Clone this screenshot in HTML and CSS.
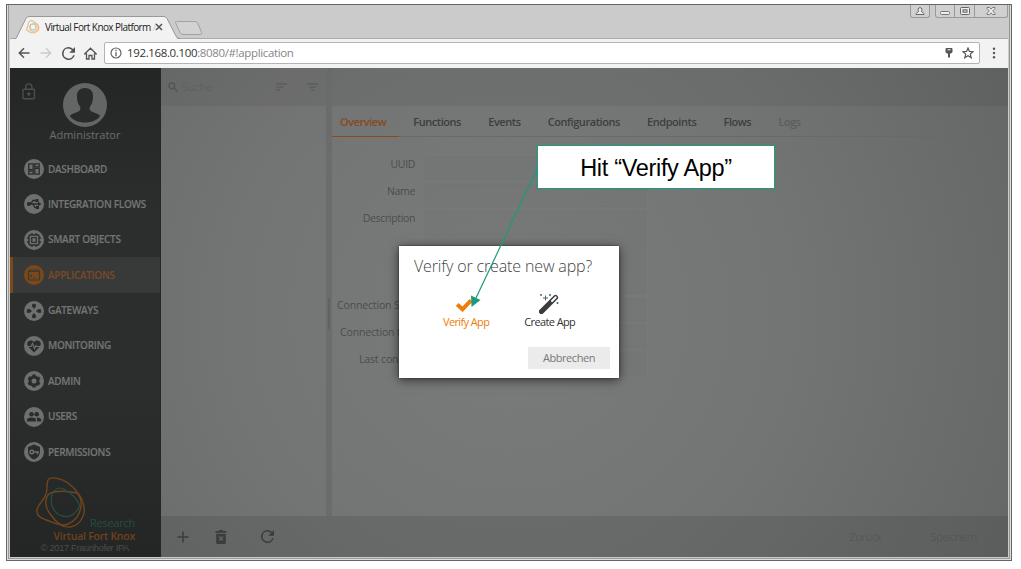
FILE: index.html
```
<!DOCTYPE html>
<html lang="en">
<head>
<meta charset="utf-8">
<title>Virtual Fort Knox Platform</title>
<link rel="stylesheet" href="styles.css">
</head>
<body>
<div class="window">
  <header class="chrome">
    <div class="tabstrip">
      <svg class="tabshape" width="206" height="24" viewBox="0 0 206 24">
        <path d="M2 22.5 L12 2.5 Q13 .5 15 .5 H150 Q152 .5 153 2.5 L163 22.5 V24 H2Z" fill="#f2f2f2"/>
        <path d="M0 22.5 H2 L12 2.5 Q13 .5 15 .5 H150 Q152 .5 153 2.5 L162 20 Q163 22.5 166 22.5" fill="none" stroke="#999"/>
        <path d="M161.500 6.500 Q161 5.500 162.500 5.500 H181 Q183 5.500 184 7.500 L187.500 16.500 Q188 18.500 186 18.500 H169 Q167 18.500 166 16.500Z" fill="#d2d2d2" stroke="#a2a2a2"/>
      </svg>
      <div class="tab">
        <svg width="14" height="14" viewBox="0 0 14 14" fill="none"><path d="M4 1C7-.5 8 3 11 4c3 2 2 7-1 8-4 2-7 0-9-2-1-2 1-3 1-5 0-1 0-3 2-4Z" stroke="#efbd8f" stroke-width="1.300"/><circle cx="7.500" cy="7.500" r="4" stroke="#efbd8f"/><circle cx="7" cy="7" r="3" stroke="#a6cbbf"/></svg>
        <span class="tabtitle">Virtual Fort Knox Platform <i>/</i></span>
        <svg width="8" height="8" viewBox="0 0 8 8"><path d="M1 1l6 6M7 1L1 7" stroke="#555" stroke-width="1.500"/></svg>
      </div>
      <div class="winbtns">
        <span class="wb user"><svg width="10" height="8" viewBox="0 0 10 8"><path d="M1 7.500h8c0-2-2-2.500-2.700-3C7.500 3 7 .6 5 .6S2.500 3 3.700 4.500C3 5 1 5.500 1 7.500Z" fill="#eee" stroke="#666"/></svg></span>
        <span class="wb min"><svg width="10" height="8" viewBox="0 0 10 8"><rect x=".5" y="4.500" width="9" height="3" rx="1" fill="#eee" stroke="#777"/></svg></span>
        <span class="wb max"><svg width="10" height="8" viewBox="0 0 10 8"><rect x=".5" y=".5" width="9" height="7" rx="1" fill="#eee" stroke="#666"/><rect x="3" y="2.800" width="4" height="2.400" fill="#ccc" stroke="#666"/></svg></span>
        <span class="wb close"><svg width="10" height="8" viewBox="0 0 10 8"><path d="M1 .5h2.500L5 2.200 6.500.5H9V1.500L6.700 4 9 6.500v1H6.500L5 5.800 3.500 7.500H1v-1L3.300 4 1 1.500Z" fill="#eee" stroke="#777"/></svg></span>
      </div>
    </div>
    <div class="navbar">
      <svg class="nb" width="12" height="12" viewBox="0 0 12 12"><path d="M11.500 6H1.500M6 1.300L1.300 6 6 10.700" fill="none" stroke="#555" stroke-width="1.500"/></svg>
      <svg class="nb" width="12" height="12" viewBox="0 0 12 12"><path d="M.5 6h10M6 1.300L10.700 6 6 10.700" fill="none" stroke="#ccc" stroke-width="1.500"/></svg>
      <svg class="nb" width="13" height="13" viewBox="4 4 16 16"><path fill="#555" d="M17.650 6.350A7.960 7.960 0 0 0 12 4a8 8 0 1 0 7.730 10h-2.080A6 6 0 1 1 12 6c1.660 0 3.140.69 4.220 1.780L13 11h7V4z"/></svg>
      <svg class="nb" width="13" height="13" viewBox="0 0 13 13"><path d="M.8 6.800L6.500 1.200l5.700 5.600H10.500V12H8V8.500H5V12H2.500V6.800Z" fill="none" stroke="#555" stroke-width="1.300"/></svg>
      <div class="address">
        <svg width="12" height="12" viewBox="0 0 12 12"><circle cx="6" cy="6" r="5" fill="none" stroke="#666" stroke-width="1.200"/><path d="M6 2.800v1.400M6 5.200v4" stroke="#666" stroke-width="1.400"/></svg>
        <span class="url">192.168.0.100<em>:8080/#!application</em></span>
        <svg class="key" width="8" height="10" viewBox="0 0 8 10"><path d="M1 0h6l.5 1v3L6 5.500H5V9L4 10 3 9V5.500H2L.5 4V1Z" fill="#555"/><path d="M2.500 1.800h3" stroke="#fff"/></svg>
        <svg width="12" height="12" viewBox="0 0 12 12"><path d="M6 1l1.400 3.400 3.700.3-2.800 2.400.9 3.600L6 8.800l-3.200 1.900.9-3.600L.9 4.700l3.700-.3Z" fill="none" stroke="#555" stroke-width="1.200"/></svg>
      </div>
      <svg class="dots" width="4" height="12" viewBox="0 0 4 12" fill="#555"><circle cx="2" cy="1.700" r="1.200"/><circle cx="2" cy="6" r="1.200"/><circle cx="2" cy="10.300" r="1.200"/></svg>
    </div>
  </header>

  <div class="app">
    <aside class="sidebar">
      <svg class="lock" width="14" height="17" viewBox="0 0 14 17" fill="none" stroke="#4b4e4c" stroke-width="1.400"><rect x="1" y="6.200" width="11.500" height="9.600" rx="1"/><path d="M3.700 6V4a3.100 3.100 0 0 1 6.200 0v2"/><circle cx="6.800" cy="11" r="1" fill="#4b4e4c"/></svg>
      <div class="profile">
        <svg width="44" height="44" viewBox="0 0 44 44"><circle cx="22" cy="22" r="22" fill="#646665"/><path d="M22 5c-6 0-8.500 4-8 9 0 4 1 7 3 9.500.8 2 .5 4-1.500 5C11 30.500 8 31 6.800 33 10 37.500 16 39.500 22 39.500S34 37.500 37.200 33C36 31 33 30.500 28.500 28.500c-2-1-2.300-3-1.500-5 2-2.500 3-5.500 3-9.500.5-5-2-9-8-9Z" fill="#292b2a"/></svg>
        <span>Administrator</span>
      </div>
      <nav class="menu">
        <a class="item"><svg class="ico" viewBox="0 0 20 20"><circle cx="10" cy="10" r="10" fill="#6e706f"/><path d="M4.800 4.800h4.400v5.800H4.800ZM10.800 4.800h4.400v3h-4.400ZM4.800 12.200h4.400v3H4.800ZM10.800 9.400h4.400v5.800h-4.400Z" fill="none" stroke="#2a2c2b" stroke-width="1.300"/></svg>DASHBOARD</a>
        <a class="item"><svg class="ico" viewBox="0 0 20 20"><circle cx="10" cy="10" r="10" fill="#6e706f"/><path d="M4 10h12M6.500 10L9 6.500h3M9 10l2 3.500h2" fill="none" stroke="#2a2c2b" stroke-width="1.300"/><circle cx="4.800" cy="10" r="2" fill="#2a2c2b"/><path d="M14 7.700l3.500 2.300-3.500 2.300ZM11.500 5h3v3h-3ZM12 12h3v3h-3Z" fill="#2a2c2b"/></svg>INTEGRATION FLOWS</a>
        <a class="item"><svg class="ico" viewBox="0 0 20 20"><circle cx="10" cy="10" r="10" fill="#6e706f"/><rect x="5" y="5" width="10" height="10" rx="1" fill="none" stroke="#2a2c2b" stroke-width="1.400"/><rect x="7.700" y="7.700" width="4.600" height="4.600" fill="none" stroke="#2a2c2b" stroke-width="1.200"/><path d="M8 3v2M12 3v2M8 15v2M12 15v2M3 8h2M3 12h2M15 8h2M15 12h2" stroke="#2a2c2b" stroke-width="1.300"/></svg>SMART OBJECTS</a>
        <a class="item active"><svg class="ico" viewBox="0 0 20 20"><circle cx="10" cy="10" r="10" fill="#7a4819"/><rect x="4.500" y="5" width="11" height="10" rx="1" fill="none" stroke="#383a39" stroke-width="1.200"/><path d="M4.500 6.500h11M6 9.500l2 1.500-2 1.500M9 13h3" fill="none" stroke="#383a39" stroke-width="1"/></svg>APPLICATIONS</a>
        <a class="item"><svg class="ico" viewBox="0 0 20 20"><circle cx="10" cy="10" r="10" fill="#6e706f"/><path d="M8.600 3.300h2.800v2.500L10 7.500 8.600 5.800ZM8.600 16.700h2.800v-2.500L10 12.500l-1.400 1.700ZM3.300 8.600v2.800h2.500L7.500 10 5.800 8.600ZM16.700 8.600v2.800h-2.500L12.500 10l1.700-1.400Z" fill="#2a2c2b" stroke="#2a2c2b" stroke-width=".8"/></svg>GATEWAYS</a>
        <a class="item"><svg class="ico" viewBox="0 0 20 20"><circle cx="10" cy="10" r="10" fill="#6e706f"/><path d="M10 16.500L4.500 11C1 7 5.500 2 10 6c4.500-4 9 1 5.500 5Z" fill="#2a2c2b"/><path d="M3 10.500h4l1.500-3 2 5 1.500-3 .8 1H17" fill="none" stroke="#6e706f" stroke-width="1.200"/></svg>MONITORING</a>
        <a class="item"><svg class="ico" viewBox="0 0 20 20"><circle cx="10" cy="10" r="10" fill="#6e706f"/><circle cx="10" cy="10" r="5.500" fill="#2a2c2b"/><path d="M10 3.500v13M4.400 6.700l11.200 6.600M4.400 13.300l11.200-6.600" stroke="#2a2c2b" stroke-width="3.300"/><circle cx="10" cy="10" r="2.500" fill="#6e706f"/></svg>ADMIN</a>
        <a class="item"><svg class="ico" viewBox="0 0 20 20"><circle cx="10" cy="10" r="10" fill="#6e706f"/><g fill="#2a2c2b"><circle cx="7.500" cy="7.200" r="2.300"/><circle cx="12.700" cy="7.200" r="2.300"/><path d="M3 14.500v-1.700c0-3 9-3 9 0v1.700ZM13 14.500h4.200v-1.700c0-1.600-2.500-2.300-5-2.200 1 .8.900 1.600.8 3.900Z"/></g></svg>USERS</a>
        <a class="item"><svg class="ico" viewBox="0 0 20 20"><circle cx="10" cy="10" r="10" fill="#6e706f"/><path d="M10 2.500L16 5v4.500c0 4-3 7-6 8-3-1-6-4-6-8V5Z" fill="#2a2c2b"/><circle cx="7.800" cy="10" r="1.800" fill="none" stroke="#6e706f" stroke-width="1.400"/><path d="M9.500 10H15M13.500 10v2.300" stroke="#6e706f" stroke-width="1.500"/></svg>PERMISSIONS</a>
      </nav>
      <div class="brand">
        <svg width="50" height="53" viewBox="0 0 50 53" fill="none"><path d="M12 4C14 0 25 2 32 7c8 6 14 14 13 23-1 10-6 15-13 18-6 3-14-1-19-3C5 42 0 40 1 34 2 28 8 25 10 18 12 12 10 9 12 4Z" stroke="#70451d" stroke-width="1.400"/><path d="M13 18c5-4 20-3 28-1 4 2 8 13 7 19-1 8-7 14-14 15-9 1-15-6-19-12-6-7-7-16-2-21Z" stroke="#70451d" stroke-width="1.400"/><path d="M17 16c4-5 9-5 14-1 5 3 9 7 12 13 2 4-3 8-7 11-6 4-15 0-18-5-4-6-3-13-1-18Z" stroke="#255247" stroke-width="1.100"/></svg>
        <span class="research">Research</span>
        <span class="vfk">Virtual Fort Knox</span>
        <span class="copy">© 2017 Fraunhofer IPA</span>
      </div>
    </aside>

    <div class="workspace">
      <div class="panels">
        <section class="list">
          <div class="search">
            <svg width="10" height="10" viewBox="0 0 10 10" fill="none" stroke="#515352" stroke-width="1.400"><circle cx="3.800" cy="3.800" r="2.900"/><path d="M6 6l3.500 3.500"/></svg>
            <span>Suche</span>
            <svg class="sort" width="11" height="8" viewBox="0 0 11 8" stroke="#555756" stroke-width="1.200"><path d="M0 1h11M0 4h7.500M0 7h4"/></svg>
            <svg width="11" height="8" viewBox="0 0 11 8" stroke="#555756" stroke-width="1.200"><path d="M0 1h11M2 4h7M4 7h3"/></svg>
          </div>
        </section>
        <div class="splitter"><i></i></div>
        <section class="detail">
          <div class="topbar"></div>
          <div class="tabs">
            <span class="t on">Overview</span><span class="t">Functions</span><span class="t">Events</span><span class="t">Configurations</span><span class="t">Endpoints</span><span class="t">Flows</span><span class="t off">Logs</span>
          </div>
          <div class="form">
            <label>UUID</label><div class="field"></div>
            <label>Name</label><div class="field"></div>
            <label>Description</label><div class="field area"></div>
            <label>Connection State</label><div class="field"></div>
            <label>Connection type</label><div class="field"></div>
            <label>Last connection</label><div class="field"></div>
          </div>
        </section>
      </div>
      <footer class="actions">
        <svg width="12" height="12" viewBox="0 0 12 12"><path d="M6 .5v11M.5 6h11" stroke="#3b3d3c" stroke-width="1.500"/></svg>
        <svg class="trash" width="12" height="14" viewBox="0 0 12 14"><path d="M.5 1h3l1-1h3l1 1h3v1.700H.5ZM1.200 3.700h9.600V12.500q0 1.500-1.500 1.500H2.700q-1.500 0-1.500-1.500Z" fill="#3b3d3c"/><path d="M4 6.500l4 4M8 6.500l-4 4" stroke="#626463" stroke-width="1.400"/></svg>
        <svg class="reload" width="13" height="13" viewBox="4 4 16 16"><path fill="#3b3d3c" d="M17.650 6.350A7.960 7.960 0 0 0 12 4a8 8 0 1 0 7.730 10h-2.080A6 6 0 1 1 12 6c1.660 0 3.140.69 4.220 1.780L13 11h7V4z"/></svg>
        <span class="back">Zurück</span>
        <span class="save">Speichern</span>
      </footer>
    </div>
  </div>
</div>

<div class="dialog">
  <h1>Verify or create new app?</h1>
  <div class="choices">
    <div class="choice verify"><svg width="18" height="14" viewBox="0 0 18 14"><path d="M2.200 6.500L7.500 11.300 16 2.300" fill="none" stroke="#ef7d0a" stroke-width="4"/></svg><span>Verify App</span></div>
    <div class="choice create"><svg width="20" height="20" viewBox="0 0 20 20"><path d="M2.500 17.500L16.500 3.500" stroke="#3c3c3c" stroke-width="5.200" stroke-linecap="round"/><path d="M13 7l3.700-3.700" stroke="#fff" stroke-width="2" stroke-linecap="round"/><path d="M6.500 1.500v5M4 4h5M2 0v2M1 1h2M11 0v2M10 1h2M18.500 8v2M17.500 9h2" stroke="#4b6470" stroke-width="1"/></svg><span>Create App</span></div>
  </div>
  <button>Abbrechen</button>
</div>
<div class="callout">Hit “Verify App”</div>
<svg class="arrow" width="80" height="152" viewBox="0 0 80 152"><path d="M72 13L11 142" stroke="#1b9a7c" stroke-width="1.200"/><path d="M6.500 151 6 139.500 15.500 144Z" fill="#1b9a7c"/></svg>
</body>
</html>
```
FILE: styles.css
```
* { box-sizing: border-box; }
body { margin: 0; width: 1021px; height: 569px; overflow: hidden; background: #fff; font-family: "Open Sans", "Noto Sans", sans-serif; position: relative; padding: 4px 0 0 6px; }
svg { display: block; flex: none; }

/* browser window */
.window { width: 1006px; height: 557px; border: 1px solid #666; background: #cbcbcb; padding: 0 3px 3px; box-shadow: inset 1px -1px #ddd, inset -1px -1px #ddd, inset 2px -2px #999, inset -2px -2px #999; }
.chrome { height: 63px; }
.tabstrip { height: 34px; display: flex; position: relative; border-bottom: 1px solid #aaa; }
.tabshape { position: absolute; left: 4px; top: 11px; }
.tab { position: relative; display: flex; align-items: center; height: 14px; margin: 15px 0 0 16px; width: 137px; }
.tabtitle { font: 10px "Open Sans", sans-serif; letter-spacing: -.58px; color: #222; margin-left: 5px; width: 106px; white-space: nowrap; margin-right: 4px; line-height: 15px; }
.tabtitle i { color: #ccc; font-style: normal; }
.winbtns { display: flex; height: 13px; margin-left: auto; }
.wb { display: flex; align-items: center; justify-content: center; border: 1px solid #999; border-top: 0; background: #d0d0d0; }
.user { width: 20px; margin-right: 5px; border-radius: 0 0 3px 3px; }
.min { width: 20px; border-radius: 0 0 0 3px; }
.max { width: 20px; border-left: 0; }
.close { width: 33px; border-left: 0; border-radius: 0 0 3px; }
.navbar { height: 29px; background: #f2f2f2; display: flex; align-items: center; padding: 0 0 1px 8px; }
.nb { margin-right: 10px; }
.nb:nth-child(3) { margin-right: 9px; }
.nb:nth-child(4) { margin-right: 7px; }
.address { height: 22px; width: 876px; border: 1px solid #b3b3b3; border-radius: 2px; background: #fff; display: flex; align-items: center; padding: 0 5px; }
.url { font-size: 11.5px; letter-spacing: -.36px; color: #333; margin-left: 5px; line-height: 18px; white-space: nowrap; }
.url em { font-style: normal; color: #868686; }
.key { margin-left: auto; margin-right: 9px; }
.dots { margin-left: 12px; }

/* application */
.app { height: 489px; display: flex; background: radial-gradient(circle 620px at 500px 245px, #7a7c7b 0%, #737574 45%, #626463 100%); }
.sidebar { width: 151px; background: linear-gradient(#242625, #2c2e2d 30%, #2c2e2d 65%, #242625); border-right: 1px solid #262827; position: relative; }
.lock { position: absolute; left: 12px; top: 15px; }
.profile { height: 83px; display: flex; flex-direction: column; align-items: center; padding-top: 15px; color: #6d6f6e; font-size: 11px; line-height: 18px; }
.profile span { display: block; white-space: nowrap; letter-spacing: 0; margin-top: -1px; }
.menu { display: flex; flex-direction: column; }
.item { height: 35.4px; display: flex; align-items: center; padding-left: 14px; gap: 4px; font-size: 10px; letter-spacing: -.3px; font-weight: 700; color: #737574; white-space: nowrap; font-stretch: normal; }
.item { font-weight: 600; padding-bottom: .4px; -webkit-text-stroke: .15px; }
.ico { width: 20px; height: 20px; position: relative; top: .6px; }
.active { background: #383a39; color: #784829; border-left: 3px solid #7a4819; padding-left: 11px; }
.brand { display: flex; flex-direction: column; align-items: flex-end; padding: 6px 25px 0 0; }
.brand svg { align-self: flex-start; margin-left: 26px; }
.research { font-size: 11px; letter-spacing: -.25px; line-height: 14px; color: #214f43; margin-top: -13px; }
.vfk { font-size: 10.5px; letter-spacing: -.24px; line-height: 13px; font-weight: 600; color: #6e421c; white-space: nowrap; }
.copy { font: 9.300px/11px "Liberation Sans", sans-serif; letter-spacing: -.32px; color: #4a4c4b; margin-right: 6px; white-space: nowrap; }
.workspace { flex: 1; display: flex; flex-direction: column; min-width: 0; }
.panels { flex: 1; display: flex; }
.list { width: 165px; }
.search { height: 38px; background: rgba(30, 35, 32, .07); display: flex; align-items: center; padding: 0 8px 1px 7px; color: #5a5c5b; font-size: 11px; letter-spacing: -.1px; font-weight: 300; }
.search span { margin-left: 4px; }
.search .sort { margin-left: auto; margin-right: 20px; }
.splitter { width: 6px; background: rgba(30, 33, 32, .11); display: flex; align-items: center; justify-content: flex-start; padding: 43px 0 0 2px; }
.splitter i { width: 2px; height: 31px; background: #616362; }
.detail { flex: 1; }
.topbar { height: 38px; background: rgba(30, 35, 32, .08); }
.tabs { height: 31px; display: flex; border-bottom: 1px solid #686a69; padding-left: 8px; font-size: 11px; letter-spacing: -.45px; font-weight: 600; color: #3c3e3d; line-height: 31px; }
.t { margin-right: 27.2px; white-space: nowrap; }
.on { color: #854a20; height: 31px; border-bottom: 1px solid #8a4c1c; margin: 0 14px 0 -8px; padding: 0 13px 0 8px; }
.off { color: #5b5d5c; }
.form { display: grid; grid-template-columns: 83px 221px; column-gap: 10px; row-gap: 4px; padding-top: 20px; font-size: 10.5px; letter-spacing: -.35px; color: #4b4d4c; line-height: 14px; }
.form label { text-align: right; white-space: nowrap; justify-self: start; width: 83px; }
.form label:nth-of-type(4), .form label:nth-of-type(5), .form label:nth-of-type(6) { text-align: left; letter-spacing: -.15px; }
.form label:nth-of-type(4) { padding-left: 5px; }
.form label:nth-of-type(5) { padding-left: 8px; }
.form label:nth-of-type(6) { padding-left: 27px; }
.field { height: 23px; background: rgba(30, 33, 32, .025); border: 1px solid rgba(30, 33, 32, .025); }
.area { height: 83px; }
.actions { height: 41px; background: rgba(35, 38, 37, .15); display: flex; align-items: center; padding: 0 31px 0 16px; color: #505251; font-size: 11px; letter-spacing: -.35px; font-weight: 300; }
.trash { margin-left: 26px; }
.reload { margin-left: 34px; }
.back { margin-left: auto; margin-right: 49px; }

/* overlays */
.dialog { position: absolute; left: 399px; top: 246px; width: 220px; height: 132px; background: #fff; box-shadow: 0 2px 10px rgba(0, 0, 0, .6), 0 0 2px rgba(0, 0, 0, .5); padding: 8px 9px 9px 15px; display: flex; flex-direction: column; }
h1 { margin: 0; font-size: 16px; letter-spacing: -.14px; line-height: 24px; font-weight: 300; color: #444; white-space: nowrap; }
.choices { display: flex; height: 69px; padding: 16px 0 0 29px; }
.choice { display: flex; flex-direction: column; align-items: center; justify-content: space-between; height: 36px; font-size: 11px; letter-spacing: -.62px; line-height: 16px; color: #333; white-space: nowrap; }
.verify { color: #ef7d0a; margin-right: 35px; }
.verify svg { margin: 4px 4px 0 0; }
.create svg { margin: 0 2px 0 0; }
.dialog button { align-self: flex-end; width: 82px; height: 22px; margin-top: 1px; border: 0; background: #ebebeb; color: #777; font: 11px "Open Sans", sans-serif; letter-spacing: -.42px; padding: 0 0 2px; flex: none; }
.callout { position: absolute; left: 537px; top: 145px; width: 238px; height: 44px; border: 1px solid #1b9a7c; background: #fff; color: #000; font: 23.500px/44px "Liberation Sans", sans-serif; letter-spacing: -.32px; text-align: center; white-space: nowrap; }
.arrow { position: absolute; left: 465px; top: 156px; overflow: visible; }
```
